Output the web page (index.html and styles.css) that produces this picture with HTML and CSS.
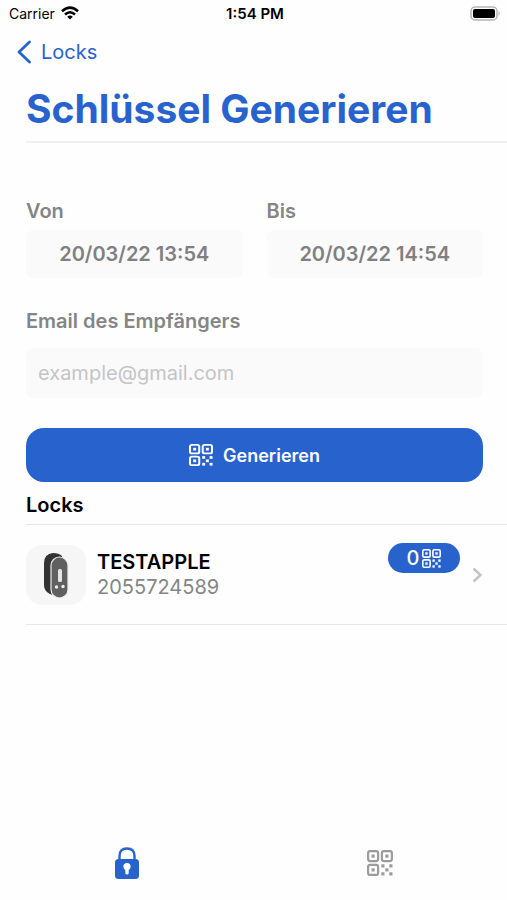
FILE: index.html
```html
<!DOCTYPE html>
<html lang="de">
<head>
<meta charset="utf-8">
<meta name="viewport" content="width=device-width, initial-scale=1">
<title>Schlüssel Generieren</title>
<link rel="stylesheet" href="styles.css">
</head>
<body>
<svg class="defs" width="0" height="0" aria-hidden="true">
  <symbol id="qr" viewBox="0 0 26 26" preserveAspectRatio="none">
    <g fill="none" stroke="currentColor" stroke-width="2.200">
      <rect x="1.100" y="1.100" width="10" height="10" rx="2"/>
      <rect x="14.900" y="1.100" width="10" height="10" rx="2"/>
      <rect x="1.100" y="14.900" width="10" height="10" rx="2"/>
    </g>
    <g fill="currentColor">
      <rect x="4.500" y="4.500" width="3.200" height="3.200"/>
      <rect x="18.300" y="4.500" width="3.200" height="3.200"/>
      <rect x="4.500" y="18.300" width="3.200" height="3.200"/>
      <rect x="14.300" y="14.300" width="3.200" height="3.200"/>
      <rect x="22.300" y="14.300" width="3.200" height="3.200"/>
      <rect x="18.300" y="18.300" width="3.200" height="3.200"/>
      <rect x="14.300" y="22.300" width="3.200" height="3.200"/>
      <rect x="22.300" y="22.300" width="3.200" height="3.200"/>
    </g>
  </symbol>
</svg>
<div class="screen">
  <div class="status">
    <div class="carrier">
      <span>Carrier</span>
      <svg width="18" height="14" viewBox="0 0 18 14" aria-hidden="true">
        <g fill="none" stroke="#000" stroke-width="2.600">
          <path d="M1 5.200Q9-2 17 5.200"/>
          <path d="M4 8.500Q9 4 14 8.500"/>
        </g>
        <path d="M6.200 10.700Q9 8.500 11.800 10.700L9 13.500Z"/>
      </svg>
    </div>
    <span class="time">1:54 PM</span>
    <svg class="battery" width="31" height="15" viewBox="0 0 31 15" aria-hidden="true">
      <rect x="1" y="1" width="26" height="13" rx="4" fill="#fff" stroke="#b5b5b5" stroke-width="1.500"/>
      <rect x="3" y="3" width="22" height="9" rx="2"/>
      <path d="M28.500 5Q31 7.500 28.500 10Z" fill="#b5b5b5"/>
    </svg>
  </div>
  <nav class="nav">
    <a class="back" href="#locks">
      <svg width="14" height="24" viewBox="0 0 14 24" aria-hidden="true"><path d="M12.500 2L2 12L12.500 22" fill="none" stroke="currentColor" stroke-width="2.800" stroke-linecap="round" stroke-linejoin="round"/></svg>
      <span>Locks</span>
    </a>
  </nav>
  <main>
    <h1>Schlüssel Generieren</h1>
    <form class="form">
      <div class="dates">
        <div class="field">
          <label for="from">Von</label>
          <input class="date" id="from" type="text" value="20/03/22 13:54">
        </div>
        <div class="field">
          <label for="to">Bis</label>
          <input class="date" id="to" type="text" value="20/03/22 14:54">
        </div>
      </div>
      <div class="field email-field">
        <label for="email">Email des Empfängers</label>
        <input class="email" id="email" type="email" placeholder="example@gmail.com">
      </div>
      <button class="generate" type="button">
        <svg width="24" height="22" aria-hidden="true"><use href="#qr"/></svg>
        <span>Generieren</span>
      </button>
    </form>
    <section class="locks" id="locks">
      <h2>Locks</h2>
      <a class="lock" href="#testapple">
        <span class="thumb">
          <svg width="60" height="60" viewBox="0 0 60 60" aria-hidden="true">
            <path d="M18 18Q18 9 27 8Q33 8 36 11L31 51Q18 49 18 40Z" fill="#333"/>
            <rect x="25" y="12" width="17" height="41" rx="8.500" fill="#606060" stroke="#ededed" stroke-width="1.200"/>
            <rect x="32" y="24" width="4" height="13" rx="1.500" fill="#e5e5e5"/>
            <circle cx="30.500" cy="42" r="1.700" fill="#eee"/>
            <circle cx="37" cy="41.500" r="1.700" fill="#eee"/>
          </svg>
        </span>
        <span class="info">
          <span class="name">TESTAPPLE</span>
          <span class="serial">2055724589</span>
        </span>
        <span class="badge">0
          <svg width="19" height="19" aria-hidden="true"><use href="#qr"/></svg>
        </span>
        <svg class="chevron" width="10" height="16" viewBox="0 0 10 16" aria-hidden="true"><path d="M1.500 1.500L8.500 8L1.500 14.500" fill="none" stroke="#c2c2c4" stroke-width="2.400"/></svg>
      </a>
    </section>
  </main>
  <nav class="tabs">
    <a class="tab active" href="#locks" aria-label="Locks">
      <svg width="24" height="32" viewBox="0 0 24 32" aria-hidden="true">
        <path d="M4.500 14V9Q4.500 1.500 12 1.500T19.500 9V14" fill="none" stroke="currentColor" stroke-width="2.400"/>
        <rect y="12" width="24" height="20" rx="3.500" fill="currentColor"/>
        <circle cx="12" cy="19.500" r="3.600" fill="#fff"/>
        <path d="M10.300 20H13.700V26Q13.700 27.500 12 27.500T10.300 26Z" fill="#fff"/>
      </svg>
    </a>
    <a class="tab" href="#keys" aria-label="Schlüssel">
      <svg width="26" height="26" aria-hidden="true"><use href="#qr"/></svg>
    </a>
  </nav>
</div>
</body>
</html>
```
FILE: styles.css
```css
* { box-sizing: border-box; }

body {
  margin: 0;
  background: #fefefe;
  color: #000;
  font-family: Inter, "Liberation Sans", sans-serif;
}

a { color: inherit; text-decoration: none; }
svg { display: block; flex: none; }
.defs { position: absolute; }

.screen {
  min-height: 100vh;
  display: flex;
  flex-direction: column;
}

.status {
  display: grid;
  grid-template-columns: 1fr auto 1fr;
  align-items: center;
  height: 26px;
  padding: 0 6px 0 9px;
  font-size: 14px;
}
.carrier { display: flex; align-items: center; gap: 6px; }
.time { font-size: 15px; font-weight: 600; }
.battery { justify-self: end; }

.nav { padding: 12px 17px; }
.back {
  display: inline-flex;
  align-items: center;
  gap: 10px;
  color: #2863cd;
  font-size: 20px;
  line-height: 28px;
}

main { flex: 1; padding-left: 26px; }

h1 {
  margin: 0;
  padding: 5px 0 8px;
  border-bottom: 2px solid #f0f0f0;
  color: #2863cd;
  font-size: 39px;
  line-height: 48px;
  font-weight: 700;
}

.form { padding: 55px 24px 0 0; }
.dates {
  display: grid;
  grid-template-columns: 1fr 1fr;
  gap: 24px;
}
.field { display: flex; flex-direction: column; gap: 6px; min-width: 0; }
.email-field { margin-top: 30px; gap: 14px; }

label {
  color: #858585;
  font-size: 20px;
  line-height: 26px;
  font-weight: 600;
}

input {
  width: 100%;
  height: 48px;
  border: 0;
  border-radius: 8px;
  background: #fafafa;
  font-family: inherit;
  font-size: 20px;
}
.date { padding: 0; color: #808080; font-weight: 600; text-align: center; }
.email { height: 50px; padding: 0 12px; color: #333; }
.email::placeholder { color: #c4c4c6; opacity: 1; }

.generate {
  display: flex;
  align-items: center;
  justify-content: center;
  gap: 10px;
  width: 100%;
  height: 54px;
  margin-top: 30px;
  padding: 0;
  border: 0;
  border-radius: 18px;
  background: #2863cd;
  color: #fff;
  font-family: inherit;
  font-size: 18px;
  font-weight: 600;
}

h2 {
  margin: 0;
  padding: 10px 0 6px;
  border-bottom: 1px solid #e6e6e6;
  font-size: 20px;
  line-height: 26px;
  font-weight: 600;
}

.lock {
  display: flex;
  align-items: center;
  height: 100px;
  padding-right: 25px;
  border-bottom: 1px solid #e6e6e6;
}
.thumb { border-radius: 16px; background: #f6f6f6; }
.info {
  flex: 1;
  display: flex;
  flex-direction: column;
  margin-left: 11px;
  font-size: 20px;
  line-height: 25px;
}
.name { font-weight: 600; }
.serial { color: #858585; }
.badge {
  align-self: flex-start;
  display: flex;
  align-items: center;
  justify-content: center;
  gap: 3px;
  width: 72px;
  height: 30px;
  margin-top: 18px;
  border-radius: 15px;
  background: #2863cd;
  color: #fff;
  font-size: 20px;
  font-weight: 500;
}
.chevron { margin-left: 12px; }

.tabs {
  display: grid;
  grid-template-columns: 1fr 1fr;
  height: 74px;
}
.tab {
  display: flex;
  align-items: center;
  justify-content: center;
  color: #9b9b9b;
}
.tab.active { color: #2863cd; }
```
